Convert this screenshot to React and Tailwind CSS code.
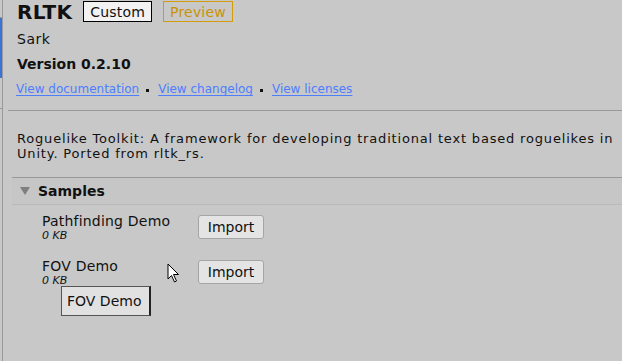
import React from 'react';

const SAMPLES = [
  { name: 'Pathfinding Demo', size: '0 KB' },
  { name: 'FOV Demo', size: '0 KB' },
];

const LINKS = ['View documentation', 'View changelog', 'View licenses'];

function Cursor() {
  return (
    <svg width="14" height="21" viewBox="0 0 14 21" className="absolute left-[167px] top-[263px]">
      <path d="M1 1 L1 16 L4.5 12.5 L7.5 19 L9.5 18 L6.5 11.5 L11.5 11.5 Z" fill="#fff" stroke="#000" strokeWidth="1" strokeLinejoin="round" />
    </svg>
  );
}

export default function App() {
  return (
    <div
      className="relative flex w-[622px] h-[361px] overflow-hidden bg-[#c8c8c8] text-[#111]"
      style={{ fontFamily: '"DejaVu Sans", Verdana, sans-serif' }}
    >
      {/* left list pane edge */}
      <div className="relative w-[3px] shrink-0 border-r border-[#9a9a9a]">
        <div className="absolute left-0 top-[17px] h-[61px] w-[2px] bg-[#3a72d8]" />
        <div className="absolute left-0 top-[17px] h-px w-[3px] bg-[#9a9a9a]" />
        <div className="absolute left-0 top-[108px] h-px w-[3px] bg-[#9a9a9a]" />
      </div>

      <div className="flex-1 min-w-0">
        {/* header */}
        <div className="pl-[14px]">
          <div className="flex items-center h-[23px] gap-[11px]">
            <span className="text-[20px] font-bold leading-none tracking-[0.3px]">RLTK</span>
            <span className="h-[21px] px-[6px] flex items-center border border-black bg-[#f2f2f2] text-[14px] leading-none tracking-[0.2px]">Custom</span>
            <span className="h-[21px] px-[6px] flex items-center border border-[#d39c0c] text-[#c8920a] text-[14px] leading-none tracking-[0.2px]">Preview</span>
          </div>
          <div className="mt-[7px] h-[18px] flex items-center text-[14px] tracking-[0.5px]">Sark</div>
          <div className="mt-[7px] h-[18px] flex items-center text-[14px] font-bold">Version 0.2.10</div>
          <div className="mt-[7px] h-[18px] flex items-center text-[12px] -ml-[1px]">
            {LINKS.map((l, i) => (
              <React.Fragment key={l}>
                {i > 0 && <span className="ml-[7px] mr-[9px] w-[3px] h-[3px] bg-[#111] mt-[2px]" />}
                <a className="text-[#4c7eff] underline underline-offset-[2px] decoration-1">{l}</a>
              </React.Fragment>
            ))}
          </div>
        </div>

        <div className="mt-[12px] ml-[5px] h-px bg-[#999]" />

        <p className="pl-[14px] pr-[1px] mt-[20px] text-[13px] leading-[15px] tracking-[0.82px]">
          Roguelike Toolkit: A framework for developing traditional text based roguelikes in Unity. Ported from rltk_rs.
        </p>

        {/* samples */}
        <div className="mt-[16px] ml-[9px] border-t border-[#999]">
          <div className="h-[27px] flex items-center border-b border-[#bababa] bg-[#c6c6c6]">
            <span className="ml-[8px] w-0 h-0 border-l-[5px] border-r-[5px] border-t-[8px] border-l-transparent border-r-transparent border-t-[#7f7f7f]" />
            <span className="ml-[8px] text-[14px] font-bold">Samples</span>
          </div>
          <div className="pl-[30px] pt-[7px] flex flex-col gap-[15px]">
            {SAMPLES.map(s => (
              <div key={s.name} className="flex items-start">
                <div className="w-[156px]">
                  <div className="text-[14px] leading-[18px] tracking-[0.2px]">{s.name}</div>
                  <div className="text-[11px] italic leading-[12px]">{s.size}</div>
                </div>
                <button className="mt-[3px] w-[66px] h-[24px] rounded-[3px] border border-[#a5a5a5] bg-[#e4e4e4] text-[14px]">
                  Import
                </button>
              </div>
            ))}
          </div>
        </div>
      </div>

      {/* tooltip */}
      <div className="absolute left-[61px] top-[286px] w-[90px] h-[30px] flex items-center pl-[5px] bg-[#e1e1e1] border border-[#555] border-r-2 border-r-[#222] text-[14px]">
        FOV Demo
      </div>
      <Cursor />
    </div>
  );
}
